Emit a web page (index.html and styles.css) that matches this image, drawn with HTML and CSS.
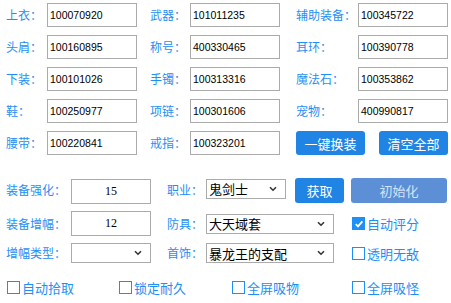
FILE: index.html
```html
<!DOCTYPE html>
<html>
<head>
<meta charset="utf-8">
<link rel="stylesheet" href="styles.css">
</head>
<body>
<div class="top">
  <span class="lbl">上衣：</span><div class="inp">100070920</div>
  <span class="lbl">武器：</span><div class="inp">101011235</div>
  <span class="lbl">辅助装备：</span><div class="inp">100345722</div>

  <span class="lbl">头肩：</span><div class="inp">100160895</div>
  <span class="lbl">称号：</span><div class="inp">400330465</div>
  <span class="lbl">耳环：</span><div class="inp">100390778</div>

  <span class="lbl">下装：</span><div class="inp">100101026</div>
  <span class="lbl">手镯：</span><div class="inp">100313316</div>
  <span class="lbl">魔法石：</span><div class="inp">100353862</div>

  <span class="lbl">鞋：</span><div class="inp">100250977</div>
  <span class="lbl">项链：</span><div class="inp">100301606</div>
  <span class="lbl">宠物：</span><div class="inp">400990817</div>

  <span class="lbl">腰带：</span><div class="inp">100220841</div>
  <span class="lbl">戒指：</span><div class="inp">100323201</div>
  <div class="btnpair"><div class="btn">一键换装</div><div class="btn">清空全部</div></div>
</div>

<div class="bottom">
  <span class="lbl">装备强化：</span>
  <div class="num numA">15</div>
  <span class="lbl lbl2">职业：</span>
  <div class="rowA">
    <div class="sel selShort"><span>鬼剑士</span><svg class="chev" width="8" height="6" viewBox="0 0 8 6"><path d="M1 1.2 L4 4.2 L7 1.2" fill="none" stroke="#333" stroke-width="1.6"/></svg></div>
    <div class="btn btnGet">获取</div>
    <div class="btn btnInit">初始化</div>
  </div>

  <span class="lbl">装备增幅：</span>
  <div class="num">12</div>
  <span class="lbl lbl2">防具：</span>
  <div class="sel"><span>大天域套</span><svg class="chev" width="8" height="6" viewBox="0 0 8 6"><path d="M1 1.2 L4 4.2 L7 1.2" fill="none" stroke="#333" stroke-width="1.6"/></svg></div>
  <label class="chk"><span class="box on"><svg width="10" height="10" viewBox="0 0 10 10"><path d="M1.8 5.2 L4 7.4 L8.4 2.4" fill="none" stroke="#fff" stroke-width="1.8"/></svg></span>自动评分</label>

  <span class="lbl">增幅类型：</span>
  <div class="sel selType"><span></span><svg class="chev" width="8" height="6" viewBox="0 0 8 6"><path d="M1 1.2 L4 4.2 L7 1.2" fill="none" stroke="#333" stroke-width="1.6"/></svg></div>
  <span class="lbl lbl2">首饰：</span>
  <div class="sel"><span>暴龙王的支配</span><svg class="chev" width="8" height="6" viewBox="0 0 8 6"><path d="M1 1.2 L4 4.2 L7 1.2" fill="none" stroke="#333" stroke-width="1.6"/></svg></div>
  <label class="chk"><span class="box"></span>透明无敌</label>
</div>

<div class="checks">
  <label class="chk c1"><span class="box"></span>自动拾取</label>
  <label class="chk c2"><span class="box"></span>锁定耐久</label>
  <label class="chk c3"><span class="box"></span>全屏吸物</label>
  <label class="chk"><span class="box"></span>全屏吸怪</label>
</div>
</body>
</html>
```

FILE: styles.css
```css
html, body {
  margin: 0;
  padding: 0;
  background: #ffffff;
  width: 451px;
  height: 303px;
  overflow: hidden;
}

body {
  font-family: "Noto Sans CJK SC", "Noto Sans", sans-serif;
  color: #1e8ff5;
}

.lbl {
  font-size: 12px;
  color: #1e8ff5;
  white-space: nowrap;
  line-height: 1;
}

.top {
  display: grid;
  grid-template-columns: 41px 90px 13px 40px 90px 16px 62px 90px;
  grid-auto-rows: 24px;
  row-gap: 8px;
  padding: 3px 0 0 6px;
  align-items: center;
}

.top .lbl:nth-child(6n+3) { grid-column: 4; }
.top .lbl:nth-child(6n+5) { grid-column: 7; }
.top .lbl:nth-child(6n+1) { grid-column: 1; }

.inp {
  box-sizing: border-box;
  height: 24px;
  border: 1px solid #ababab;
  font-family: "Liberation Sans", Arial, sans-serif;
  font-size: 10.5px;
  color: #000;
  padding-left: 2px;
  display: flex;
  align-items: center;
}

.btnpair {
  grid-column: 7 / 9;
  display: flex;
  justify-content: space-between;
  height: 24px;
}

.btn {
  box-sizing: border-box;
  background: #1f84e4;
  color: #ffffff;
  font-size: 13px;
  border-radius: 3px;
  display: flex;
  align-items: center;
  justify-content: center;
  width: 69px;
  height: 24px;
}

.bottom {
  display: grid;
  grid-template-columns: 65px 80px 16px 39px 128px 18px 96px;
  grid-template-rows: 28px 25px 20px;
  row-gap: 7px;
  padding-left: 6px;
  margin-top: 21px;
  align-items: center;
}

.lbl2 { grid-column: 4; }

.num {
  box-sizing: border-box;
  grid-column: 2;
  height: 25px;
  border: 1px solid #ababab;
  font-family: "Liberation Serif", "Times New Roman", serif;
  font-size: 12px;
  color: #000;
  display: flex;
  align-items: center;
  justify-content: center;
}

.numA { align-self: end; }

.rowA {
  grid-column: 5 / 8;
  display: flex;
  align-items: center;
  height: 28px;
}

.sel {
  box-sizing: border-box;
  height: 20px;
  border: 1px solid #ababab;
  background: #fff;
  display: flex;
  align-items: center;
  justify-content: space-between;
  padding: 0 8px 0 2px;
  font-size: 13px;
  color: #000;
}

.selShort {
  width: 80px;
  margin-top: -3px;
}

.selType { grid-column: 2; }

.chev { display: block; }

.btnGet {
  width: 49px;
  height: 25px;
  margin-left: 9px;
}

.btnInit {
  width: 96px;
  height: 25px;
  margin-left: 7px;
  background: #5c8fd6;
  color: #d6e4f7;
}

.chk {
  display: flex;
  align-items: center;
  font-size: 13px;
  color: #1e8ff5;
  white-space: nowrap;
  line-height: 1;
}

.bottom .chk { grid-column: 7; }

.box {
  box-sizing: border-box;
  width: 13px;
  height: 13px;
  border: 1px solid #1e8ff5;
  background: #fff;
  margin-right: 2px;
  display: flex;
  align-items: center;
  justify-content: center;
}

.box.on {
  background: #1e8ff5;
}

.checks {
  display: flex;
  padding-left: 7px;
  margin-top: 18px;
}

.c1 { width: 112px; }
.c2 { width: 113px; }
.c3 { width: 120px; }
```
